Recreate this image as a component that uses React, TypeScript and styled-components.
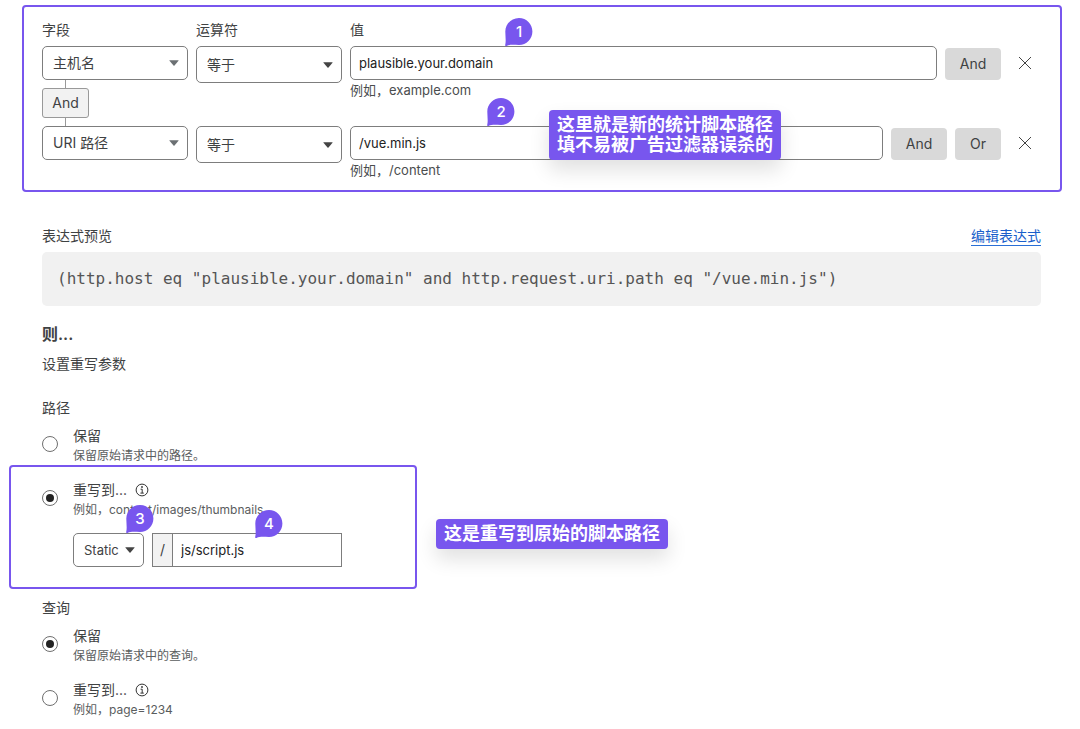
import React from "react";
import styled, { createGlobalStyle } from "styled-components";

const sans = `Inter, "Noto Sans CJK SC", sans-serif`;
const ink = "#3f4243";
const line = "#7d7d7d";
const accent = "#7856ee";

const GlobalStyle = createGlobalStyle`
  *, *::before, *::after { box-sizing: border-box; }
  body {
    margin: 0;
    background: #fff;
    color: ${ink};
    font-family: ${sans};
    font-size: 14px;
    line-height: 20px;
  }
  button, input, select { font: inherit; color: inherit; margin: 0; }
`;

const Page = styled.main`
  padding: 20px 39px 9px 42px;
`;

const RuleBuilder = styled.section`
  position: relative;
  margin-bottom: 46px;
`;

const Frame = styled.div<{ $inset: string; $width?: string }>`
  position: absolute;
  inset: ${(p) => p.$inset};
  width: ${(p) => p.$width ?? "auto"};
  border: 2px solid ${accent};
  border-radius: 4px;
  pointer-events: none;
`;

const RuleRow = styled.div`
  display: flex;
  align-items: flex-start;
  gap: 8px;
`;

const HeaderRow = styled(RuleRow)`
  margin-bottom: 6px;
`;

const NarrowColumn = styled.div`
  flex: 0 0 146px;
`;

const ValueColumn = styled.div`
  position: relative;
  flex: 1;
  min-width: 0;
`;

const SelectWrap = styled.div<{ $height: number; $arrow: string }>`
  position: relative;
  display: grid;
  align-items: center;
  height: ${(p) => p.$height}px;
  color: ${(p) => p.$arrow};

  > * { grid-area: 1 / 1; }
  > svg { justify-self: end; margin-right: 9px; pointer-events: none; }
`;

const Select = styled.select<{ $compact?: boolean }>`
  appearance: none;
  width: 100%;
  height: 100%;
  padding: 0 ${(p) => (p.$compact ? 20 : 24)}px 0 10px;
  border: 1px solid ${line};
  border-radius: 5px;
  background: #fff;
  color: ${ink};
  font-size: ${(p) => (p.$compact ? 13 : 14)}px;
`;

const TextInput = styled.input`
  display: block;
  width: 100%;
  height: 34px;
  padding: 0 8px;
  border: 1px solid ${line};
  border-radius: 5px;
  background: #fff;
  color: #222;
  font-size: 13px;
`;

const Hint = styled.div`
  color: #4a4d4e;
  font-size: 13px;
`;

const Connector = styled.div`
  display: flex;
  flex-direction: column;
  align-items: center;
  width: 47px;

  &::before, &::after {
    content: "";
    width: 1px;
    height: 8px;
    background: #999;
  }
`;

const Joiner = styled.span`
  display: flex;
  align-items: center;
  justify-content: center;
  width: 100%;
  height: 30px;
  border: 1px solid #999;
  border-radius: 3px;
  background: #f2f2f2;
`;

const ActionButton = styled.button<{ $width: number }>`
  flex: 0 0 ${(p) => p.$width}px;
  height: 32px;
  margin-top: 2px;
  padding: 0;
  border: 0;
  border-radius: 4px;
  background: #d9d9d9;
`;

const RemoveButton = styled.button`
  display: flex;
  align-items: center;
  justify-content: center;
  flex: 0 0 32px;
  height: 34px;
  padding: 0;
  border: 0;
  background: none;
`;

const BadgeShell = styled.span<{ $left: number; $drop?: number }>`
  position: absolute;
  z-index: 1;
  left: ${(p) => p.$left}px;
  top: ${(p) => -28 + (p.$drop ?? 0)}px;
  display: grid;
  width: 28px;
  height: 28px;
  color: #fff;
  font-size: 15px;
  font-weight: 500;
  line-height: 28px;
  text-align: center;

  > * { grid-area: 1 / 1; }
`;

const Note = styled.div<{ $left: number; $top: number }>`
  position: absolute;
  z-index: 1;
  left: ${(p) => p.$left}px;
  top: ${(p) => p.$top}px;
  padding: 5px 8px;
  border-radius: 4px;
  background: ${accent};
  box-shadow: 0 10px 20px rgba(0, 0, 0, 0.12);
  color: #fff;
  font-size: 18px;
  font-weight: 700;
  line-height: 20px;
  white-space: nowrap;
`;

const PreviewHeader = styled.div`
  display: flex;
  justify-content: space-between;
  margin-bottom: 6px;
`;

const EditLink = styled.a`
  height: 20px;
  border-bottom: 1px solid #2a6fd6;
  color: #1a5fcb;
  text-decoration: none;
`;

const Expression = styled.pre`
  margin: 0 0 16px;
  padding: 15px;
  border-radius: 5px;
  background: #f1f1f1;
  color: #555;
  font-family: "DejaVu Sans Mono", monospace;
  font-size: 16px;
  line-height: 24px;
  white-space: pre-wrap;
`;

const Heading = styled.h2`
  margin: 0 0 8px;
  font-size: 16px;
  font-weight: 600;
  line-height: 24px;
`;

const Intro = styled.p`
  margin: 0 0 24px;
`;

const OptionGroup = styled.fieldset<{ $after?: number }>`
  margin: 0 0 ${(p) => p.$after ?? 0}px;
  padding: 0;
  border: 0;
`;

const Legend = styled.legend`
  margin-bottom: 8px;
  padding: 0;
`;

const Option = styled.div`
  position: relative;
  display: flex;
  align-items: flex-start;
  gap: 15px;

  & + & { margin-top: 14px; }
`;

const Radio = styled.input`
  appearance: none;
  flex: 0 0 16px;
  display: grid;
  place-items: center;
  height: 16px;
  margin-top: 10px;
  border: 1px solid #6f6f6f;
  border-radius: 50%;
  background: #fff;

  &:checked::before {
    content: "";
    width: 8px;
    height: 8px;
    border-radius: 50%;
    background: #222;
  }
`;

const OptionTitle = styled.div`
  display: flex;
  align-items: center;
  gap: 8px;
`;

const OptionHint = styled.div`
  color: #5a5d5e;
  font-size: 12px;
`;

const RewriteControls = styled.div`
  display: flex;
  gap: 8px;
  margin-top: 13px;
`;

const ModeField = styled.div`
  position: relative;
  width: 71px;
`;

const PathField = styled.div`
  position: relative;
  display: flex;
  width: 190px;
  height: 34px;
  border: 1px solid ${line};
`;

const Prefix = styled.span`
  flex: 0 0 20px;
  border-right: 1px solid ${line};
  background: #f2f2f2;
  line-height: 32px;
  text-align: center;
`;

const PathInput = styled.input`
  flex: 1;
  min-width: 0;
  padding: 0 8px;
  border: 0;
  background: #fff;
  color: #222;
  font-size: 13px;
`;

const Arrow = () => (
  <svg width="10" height="6" viewBox="0 0 10 6" aria-hidden="true">
    <path d="M0.7 0.3h8.6q.6 0 .2.5L5.5 5.5q-.5.5-1 0L.5.8Q.1.3.7.3z" fill="currentColor" />
  </svg>
);

const Cross = () => (
  <svg width="14" height="14" viewBox="0 0 14 14" aria-hidden="true">
    <path d="M1 1l12 12M13 1L1 13" fill="none" stroke="#444" strokeWidth="1" />
  </svg>
);

const Info = () => (
  <svg width="14" height="14" viewBox="0 0 14 14" aria-hidden="true">
    <circle cx="7" cy="7" r="5.9" fill="none" stroke="#333" strokeWidth="1" />
    <circle cx="7" cy="4" r=".9" fill="#333" />
    <path d="M5.6 6.2h1.6v3.9M5.4 10.1h3.4" fill="none" stroke="#333" strokeWidth="1" />
  </svg>
);

const Badge = ({ n, left, drop }: { n: number; left: number; drop?: number }) => (
  <BadgeShell $left={left} $drop={drop}>
    <svg width="28" height="28" viewBox="0 0 28 28" aria-hidden="true">
      <path
        d="M14 0C21.5 0 27.4 6 27.4 13.5S21.5 27 14 27C9 27 5 26.3 1.5 28Q0 28.3 .2 27C1.2 23 .3 18 .3 13.5C.3 6 6.5 0 14 0z"
        fill={accent}
      />
    </svg>
    <span>{n}</span>
  </BadgeShell>
);

const Picker = ({ label, value, height = 34, arrow = "#6b7073", compact }: {
  label: string; value: string; height?: number; arrow?: string; compact?: boolean;
}) => (
  <SelectWrap $height={height} $arrow={arrow}>
    <Select aria-label={label} defaultValue={value} $compact={compact}>
      <option>{value}</option>
    </Select>
    <Arrow />
  </SelectWrap>
);

export default function App() {
  return (
    <>
      <GlobalStyle />
      <Page>
        <RuleBuilder>
          <HeaderRow>
            <NarrowColumn>字段</NarrowColumn>
            <NarrowColumn>运算符</NarrowColumn>
            <ValueColumn>
              <label htmlFor="host-value">值</label>
            </ValueColumn>
          </HeaderRow>
          <RuleRow>
            <NarrowColumn>
              <Picker label="字段" value="主机名" />
              <Connector>
                <Joiner>And</Joiner>
              </Connector>
            </NarrowColumn>
            <NarrowColumn>
              <Picker label="运算符" value="等于" height={37} arrow="#444" />
            </NarrowColumn>
            <ValueColumn>
              <TextInput id="host-value" defaultValue="plausible.your.domain" />
              <Hint>例如，example.com</Hint>
              <Badge n={1} left={155} />
            </ValueColumn>
            <ActionButton type="button" $width={56}>And</ActionButton>
            <RemoveButton type="button" aria-label="Remove"><Cross /></RemoveButton>
          </RuleRow>
          <RuleRow>
            <NarrowColumn>
              <Picker label="字段" value="URI 路径" />
            </NarrowColumn>
            <NarrowColumn>
              <Picker label="运算符" value="等于" height={37} arrow="#444" />
            </NarrowColumn>
            <ValueColumn>
              <TextInput aria-label="值" defaultValue="/vue.min.js" />
              <Hint>例如，/content</Hint>
              <Badge n={2} left={137} />
              <Note $left={199} $top={-16}>
                这里就是新的统计脚本路径
                <br />
                填不易被广告过滤器误杀的
              </Note>
            </ValueColumn>
            <ActionButton type="button" $width={56}>And</ActionButton>
            <ActionButton type="button" $width={46}>Or</ActionButton>
            <RemoveButton type="button" aria-label="Remove"><Cross /></RemoveButton>
          </RuleRow>
          <Frame $inset="-15px -21px -12px -20px" />
        </RuleBuilder>

        <PreviewHeader>
          <span>表达式预览</span>
          <EditLink href="#edit">编辑表达式</EditLink>
        </PreviewHeader>
        <Expression>{`(http.host eq "plausible.your.domain" and http.request.uri.path eq "/vue.min.js")`}</Expression>

        <Heading>则...</Heading>
        <Intro>设置重写参数</Intro>

        <OptionGroup $after={31}>
          <Legend>路径</Legend>
          <Option>
            <Radio type="radio" name="path" id="path-keep" />
            <div>
              <OptionTitle><label htmlFor="path-keep">保留</label></OptionTitle>
              <OptionHint>保留原始请求中的路径。</OptionHint>
            </div>
          </Option>
          <Option>
            <Radio type="radio" name="path" id="path-rewrite" defaultChecked />
            <div>
              <OptionTitle><label htmlFor="path-rewrite">重写到...</label><Info /></OptionTitle>
              <OptionHint>例如，content/images/thumbnails</OptionHint>
              <RewriteControls>
                <ModeField>
                  <Picker label="重写类型" value="Static" arrow="#444" compact />
                  <Badge n={3} left={53} />
                </ModeField>
                <PathField>
                  <Prefix>/</Prefix>
                  <PathInput aria-label="路径" defaultValue="js/script.js" />
                  <Badge n={4} left={102} drop={4} />
                </PathField>
              </RewriteControls>
            </div>
            <Frame $inset="-15px auto -22px -33px" $width="408px" />
            <Note $left={394} $top={39}>这是重写到原始的脚本路径</Note>
          </Option>
        </OptionGroup>

        <OptionGroup>
          <Legend>查询</Legend>
          <Option>
            <Radio type="radio" name="query" id="query-keep" defaultChecked />
            <div>
              <OptionTitle><label htmlFor="query-keep">保留</label></OptionTitle>
              <OptionHint>保留原始请求中的查询。</OptionHint>
            </div>
          </Option>
          <Option>
            <Radio type="radio" name="query" id="query-rewrite" />
            <div>
              <OptionTitle><label htmlFor="query-rewrite">重写到...</label><Info /></OptionTitle>
              <OptionHint>例如，page=1234</OptionHint>
            </div>
          </Option>
        </OptionGroup>
      </Page>
    </>
  );
}
